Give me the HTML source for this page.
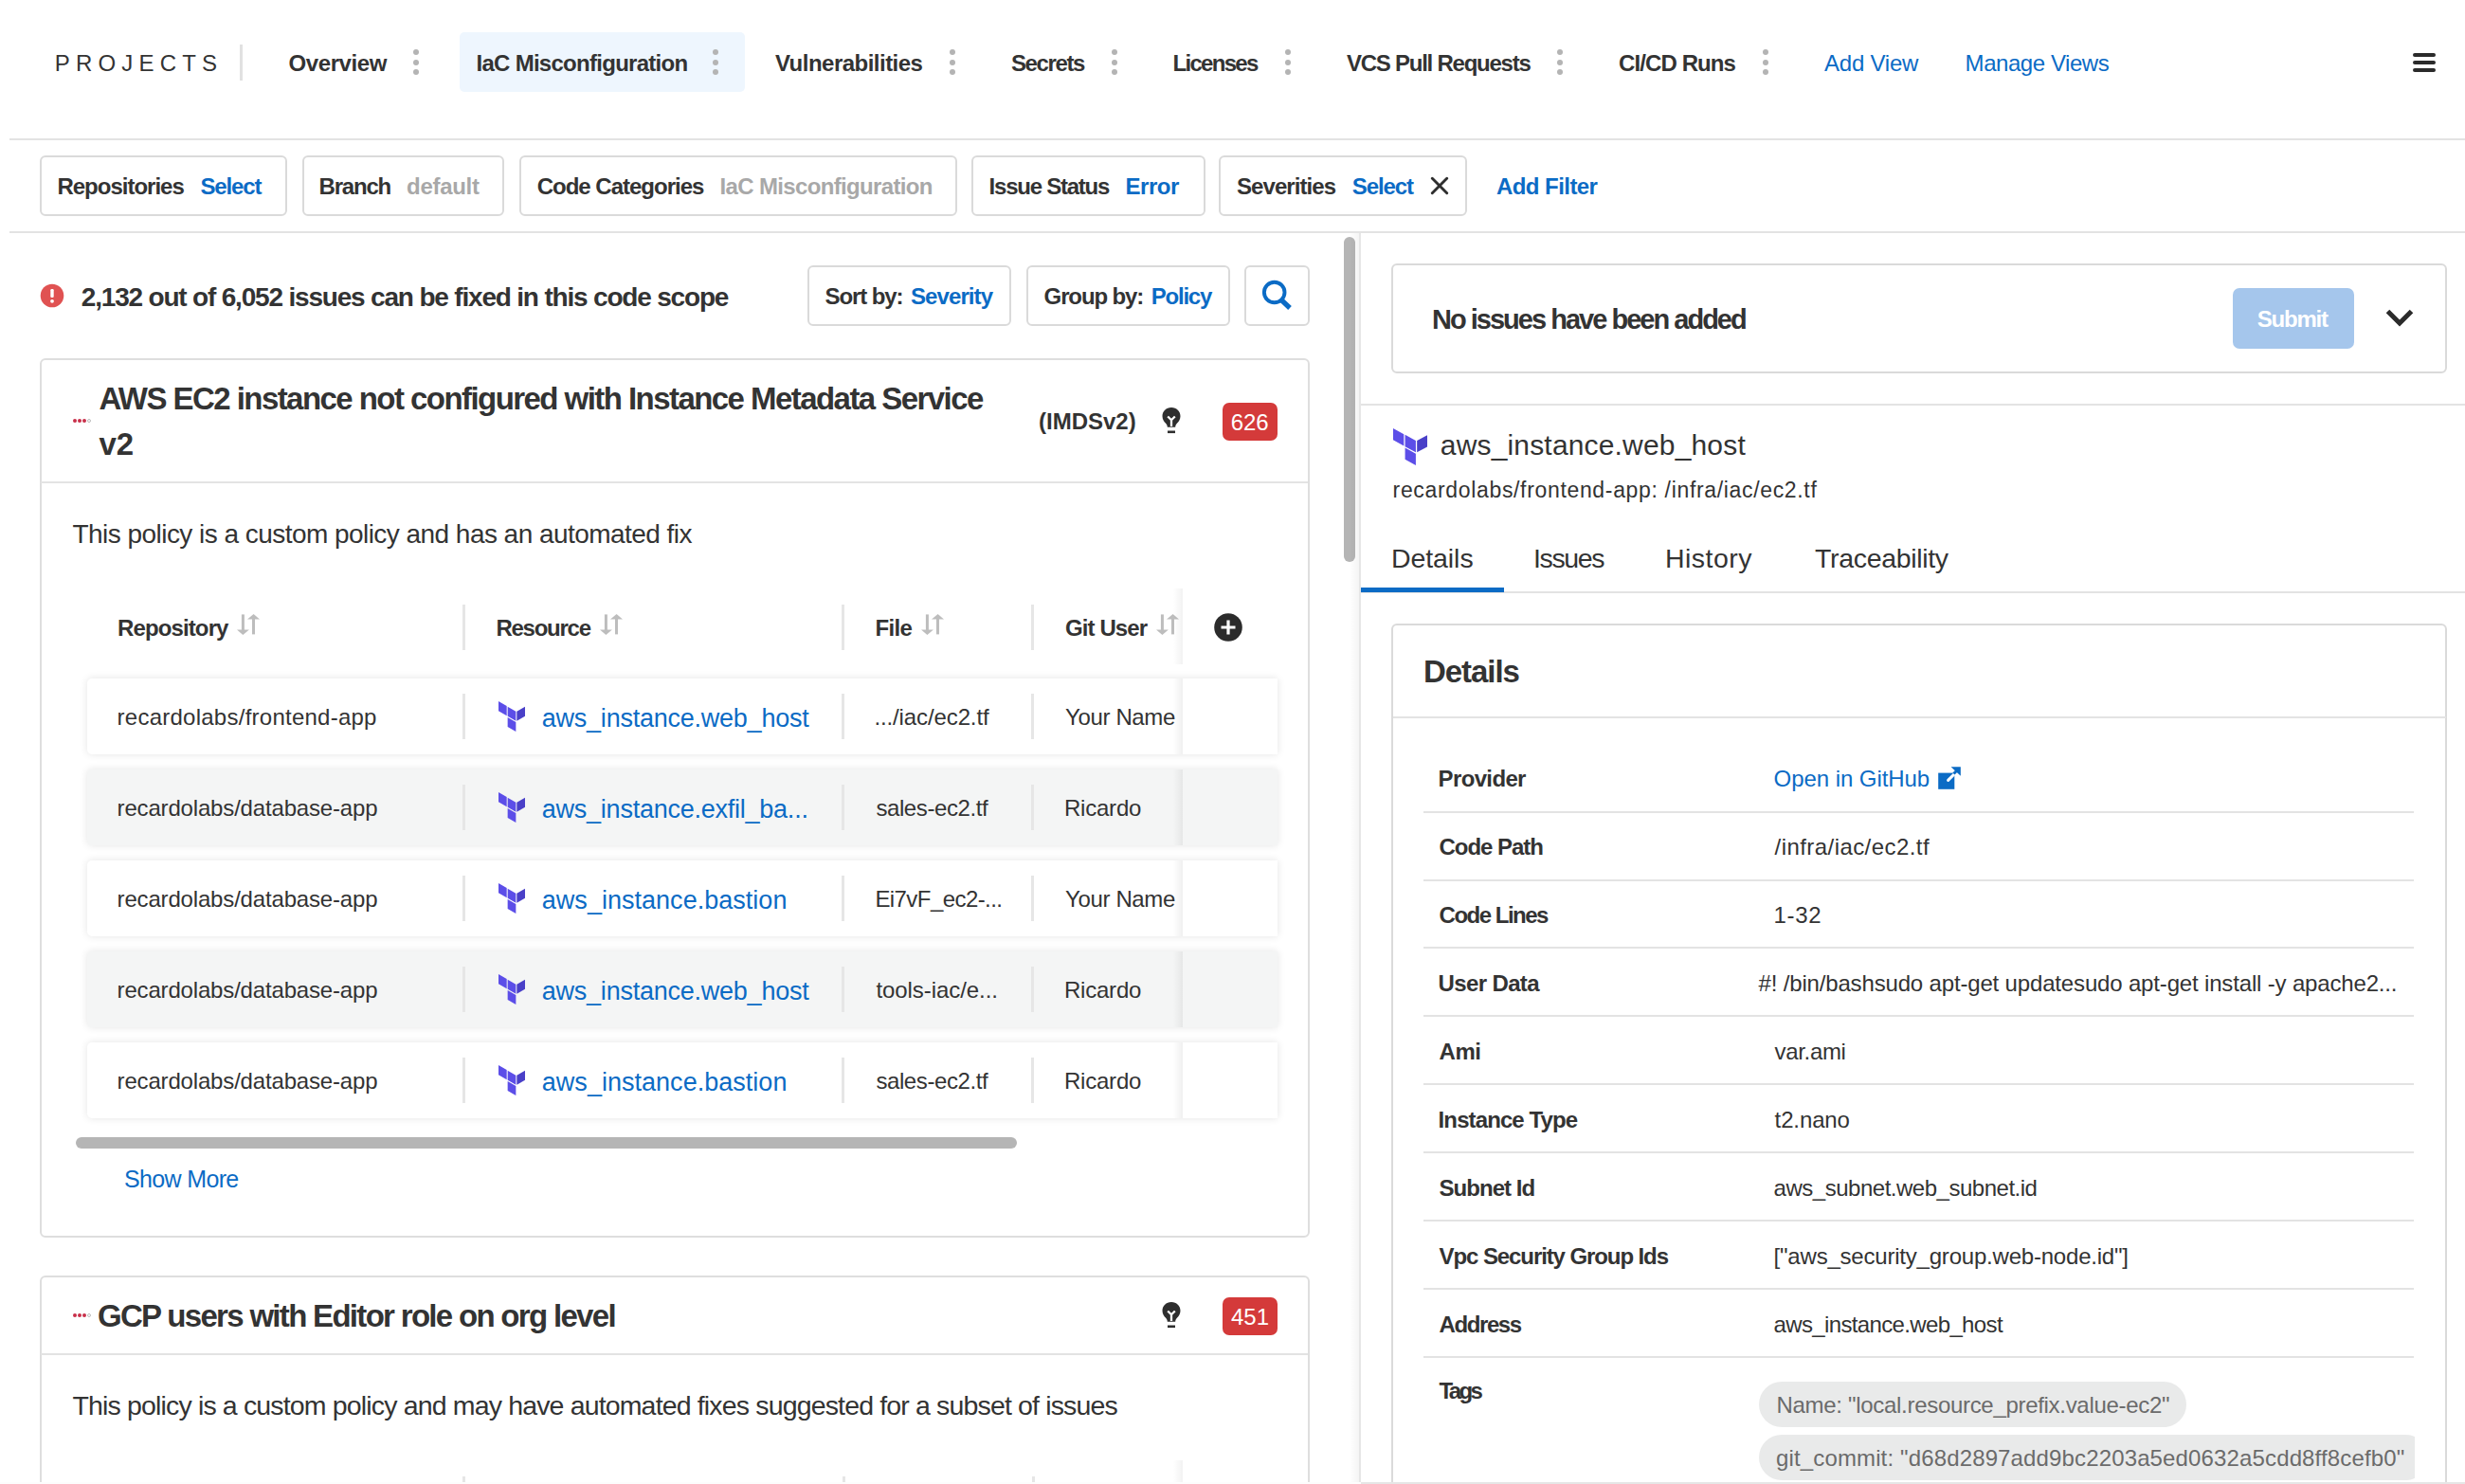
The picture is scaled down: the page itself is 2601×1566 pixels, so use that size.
<!DOCTYPE html><html><head><meta charset="utf-8"><title>IaC Misconfiguration</title><style>
*{margin:0;padding:0;box-sizing:border-box}
html,body{width:2601px;height:1566px;overflow:hidden;background:#fff}
body{position:relative;font-family:"Liberation Sans",sans-serif;color:#333333}
.abs{position:absolute}
.t{position:absolute;white-space:nowrap;line-height:1}
.dot{position:absolute;width:6.2px;height:6.2px;border-radius:50%;background:#b4b4b4}
.box{position:absolute;border:2px solid #dadada;border-radius:6px;background:transparent}
.card{position:absolute;border:2px solid #dedede;border-radius:6px;background:#fff}
.row{position:absolute;border-radius:5px 0 0 5px;box-shadow:0 0 9px rgba(0,0,0,0.11)}
.badge{position:absolute;background:#d43a3a;border-radius:7px}
.pill{position:absolute;background:#e9eaea;border-radius:24px}
</style></head><body>
<div class="abs" style="left:253px;top:47px;width:3px;height:38px;background:#e1e1e1"></div>
<div class="abs" style="left:485.3px;top:34.2px;width:300.5px;height:63.2px;background:#eef6fe;border-radius:5px"></div>
<div class="dot" style="left:435.9px;top:52.3px"></div><div class="dot" style="left:435.9px;top:62.9px"></div><div class="dot" style="left:435.9px;top:73.3px"></div>
<div class="dot" style="left:751.9px;top:52.3px"></div><div class="dot" style="left:751.9px;top:62.9px"></div><div class="dot" style="left:751.9px;top:73.3px"></div>
<div class="dot" style="left:1001.9px;top:52.3px"></div><div class="dot" style="left:1001.9px;top:62.9px"></div><div class="dot" style="left:1001.9px;top:73.3px"></div>
<div class="dot" style="left:1172.5px;top:52.3px"></div><div class="dot" style="left:1172.5px;top:62.9px"></div><div class="dot" style="left:1172.5px;top:73.3px"></div>
<div class="dot" style="left:1355.5px;top:52.3px"></div><div class="dot" style="left:1355.5px;top:62.9px"></div><div class="dot" style="left:1355.5px;top:73.3px"></div>
<div class="dot" style="left:1642.7px;top:52.3px"></div><div class="dot" style="left:1642.7px;top:62.9px"></div><div class="dot" style="left:1642.7px;top:73.3px"></div>
<div class="dot" style="left:1859.8px;top:52.3px"></div><div class="dot" style="left:1859.8px;top:62.9px"></div><div class="dot" style="left:1859.8px;top:73.3px"></div>
<div class="abs" style="left:2546px;top:56px;width:24px;height:3.8px;background:#2b2b2b;border-radius:2px"></div>
<div class="abs" style="left:2546px;top:64px;width:24px;height:3.8px;background:#2b2b2b;border-radius:2px"></div>
<div class="abs" style="left:2546px;top:72px;width:24px;height:3.8px;background:#2b2b2b;border-radius:2px"></div>
<div class="abs" style="left:10px;top:146px;width:2591px;height:2px;background:#e3e3e3"></div>
<div class="abs" style="left:10px;top:244px;width:2591px;height:2px;background:#e3e3e3"></div>
<div class="box" style="left:41.7px;top:163.7px;width:261.1px;height:64.2px;"></div>
<div class="box" style="left:319.0px;top:163.7px;width:213.4px;height:64.2px;"></div>
<div class="box" style="left:547.5px;top:163.7px;width:462.5px;height:64.2px;"></div>
<div class="box" style="left:1025.4px;top:163.7px;width:246.2px;height:64.2px;"></div>
<div class="box" style="left:1286.0px;top:163.7px;width:261.5px;height:64.2px;"></div>
<svg class="abs" style="left:1505px;top:182px" width="28" height="28" viewBox="0 0 28 28"><path d="M6.3 6.3L21.7 21.7M21.7 6.3L6.3 21.7" stroke="#2e2e2e" stroke-width="2.9" stroke-linecap="round"/></svg>
<svg class="abs" style="left:42px;top:299px" width="26" height="26" viewBox="0 0 26 26"><circle cx="13" cy="13" r="12.3" fill="#e05252"/><rect x="11.3" y="6" width="3.4" height="9" rx="1.2" fill="#fff"/><circle cx="13" cy="18.8" r="1.9" fill="#fff"/></svg>
<div class="box" style="left:851.5px;top:279.5px;width:215.6px;height:64.8px;"></div>
<div class="box" style="left:1082.6px;top:279.5px;width:215.8px;height:64.8px;"></div>
<div class="box" style="left:1313.3px;top:279.5px;width:69.1px;height:64.8px;"></div>
<svg class="abs" style="left:1325px;top:290px" width="44" height="44" viewBox="0 0 44 44"><circle cx="19.7" cy="18.5" r="10.8" fill="none" stroke="#0b6bc5" stroke-width="3.9"/><path d="M26.5 26L36 35" stroke="#0b6bc5" stroke-width="5.2"/></svg>
<div class="abs" style="left:1418px;top:250px;width:12px;height:343px;background:#b5b5b5;border-radius:6px"></div>
<div class="abs" style="left:1424px;top:246px;width:10px;height:1320px;background:linear-gradient(to right,rgba(0,0,0,0),rgba(0,0,0,0.045))"></div>
<div class="abs" style="left:1434px;top:246px;width:2px;height:1320px;background:#e6e6e6"></div>
<div class="card" style="left:41.6px;top:377.9px;width:1340.2px;height:927.9px;"></div>
<div class="abs" style="left:43px;top:508px;width:1337px;height:2px;background:#e3e3e3"></div>
<div class="abs" style="left:76.50px;top:441.80px;width:4px;height:4px;border-radius:50%;background:#c9304a"></div><div class="abs" style="left:81.55px;top:441.80px;width:4px;height:4px;border-radius:50%;background:#c9304a"></div><div class="abs" style="left:86.60px;top:441.80px;width:4px;height:4px;border-radius:50%;background:#c9304a"></div><div class="abs" style="left:91.70px;top:441.80px;width:4px;height:4px;border-radius:50%;box-sizing:border-box;border:1px solid #bbb"></div>
<svg class="abs" style="left:1225px;top:429px" width="22" height="30" viewBox="0 0 22 30"><path d="M11 1C5.5 1 1.5 5 1.5 10.2c0 3.4 1.8 5.6 3.4 7.4c1.2 1.3 1.9 2.6 1.9 4.2h8.4c0-1.6.7-2.9 1.9-4.2c1.6-1.8 3.4-4 3.4-7.4C20.5 5 16.5 1 11 1z" fill="#2e2e2e"/><path d="M7.2 10.5L11 14.2L14.8 10.5M11 14.2V21" stroke="#fff" stroke-width="2.3" fill="none"/><rect x="7" y="25.5" width="8" height="2.6" fill="#2e2e2e"/></svg>
<div class="badge" style="left:1290px;top:425px;width:58px;height:40px"></div><div class="t" style="left:1298.65px;top:433.59px;font-size:24px;color:#fff;">626</div>
<div class="abs" style="left:488.2px;top:637.5px;width:3px;height:48px;background:#e6e6e6"></div>
<div class="abs" style="left:888.2px;top:637.5px;width:3px;height:48px;background:#e6e6e6"></div>
<div class="abs" style="left:1087.9px;top:637.5px;width:3px;height:48px;background:#e6e6e6"></div>
<svg class="abs" style="left:250px;top:647px" width="24" height="24" viewBox="0 0 24 24"><path d="M6.4 1.4V18" stroke="#bdbdbd" stroke-width="3" fill="none"/><path d="M-0.1 17.5H12.9L6.4 23z" fill="#bdbdbd"/><path d="M17.5 22.4V6" stroke="#bdbdbd" stroke-width="3" fill="none"/><path d="M11 6.4H24L17.6 0.9z" fill="#bdbdbd"/></svg>
<svg class="abs" style="left:632.5px;top:647px" width="24" height="24" viewBox="0 0 24 24"><path d="M6.4 1.4V18" stroke="#bdbdbd" stroke-width="3" fill="none"/><path d="M-0.1 17.5H12.9L6.4 23z" fill="#bdbdbd"/><path d="M17.5 22.4V6" stroke="#bdbdbd" stroke-width="3" fill="none"/><path d="M11 6.4H24L17.6 0.9z" fill="#bdbdbd"/></svg>
<svg class="abs" style="left:971.5px;top:647px" width="24" height="24" viewBox="0 0 24 24"><path d="M6.4 1.4V18" stroke="#bdbdbd" stroke-width="3" fill="none"/><path d="M-0.1 17.5H12.9L6.4 23z" fill="#bdbdbd"/><path d="M17.5 22.4V6" stroke="#bdbdbd" stroke-width="3" fill="none"/><path d="M11 6.4H24L17.6 0.9z" fill="#bdbdbd"/></svg>
<svg class="abs" style="left:1220px;top:647px" width="24" height="24" viewBox="0 0 24 24"><path d="M6.4 1.4V18" stroke="#bdbdbd" stroke-width="3" fill="none"/><path d="M-0.1 17.5H12.9L6.4 23z" fill="#bdbdbd"/><path d="M17.5 22.4V6" stroke="#bdbdbd" stroke-width="3" fill="none"/><path d="M11 6.4H24L17.6 0.9z" fill="#bdbdbd"/></svg>
<div class="abs" style="left:1238px;top:621px;width:10px;height:80px;background:linear-gradient(to right,rgba(0,0,0,0),rgba(0,0,0,0.05))"></div>
<svg class="abs" style="left:1281px;top:647px" width="30" height="30" viewBox="0 0 30 30"><circle cx="15" cy="15" r="14.8" fill="#2b2b2b"/><path d="M15 7.5V22.5M7.5 15H22.5" stroke="#fff" stroke-width="3.2"/></svg>
<div class="row" style="left:92.4px;top:715.5px;width:1255.3px;height:80px;background:#ffffff"></div>
<div class="row" style="left:92.4px;top:811.6px;width:1255.3px;height:80px;background:#f4f5f5"></div>
<div class="row" style="left:92.4px;top:907.7px;width:1255.3px;height:80px;background:#ffffff"></div>
<div class="row" style="left:92.4px;top:1003.8px;width:1255.3px;height:80px;background:#f4f5f5"></div>
<div class="row" style="left:92.4px;top:1099.9px;width:1255.3px;height:80px;background:#ffffff"></div>
<div class="abs" style="left:488.2px;top:731.5px;width:3px;height:48px;background:#e6e6e6"></div>
<div class="abs" style="left:888.2px;top:731.5px;width:3px;height:48px;background:#e6e6e6"></div>
<div class="abs" style="left:1087.9px;top:731.5px;width:3px;height:48px;background:#e6e6e6"></div>
<div class="abs" style="left:1238px;top:715.5px;width:10px;height:80px;background:linear-gradient(to right,rgba(0,0,0,0),rgba(0,0,0,0.06))"></div>
<svg class="abs" style="left:526px;top:740.0px" width="28" height="32" viewBox="7.3 4.7 43.2 48.9" preserveAspectRatio="none"><path d="M22.2 13.3l13.4 7.7v15.5l-13.4-7.7z" fill="#5c4ee8"/><path d="M37.1 21v15.5l13.4-7.7V13.3z" fill="#4a40c8"/><path d="M7.3 4.7v15.5l13.4 7.7V12.4zM22.2 45.9l13.4 7.7V38.2l-13.4-7.7z" fill="#5c4ee8"/></svg>
<div class="abs" style="left:488.2px;top:827.6px;width:3px;height:48px;background:#e6e6e6"></div>
<div class="abs" style="left:888.2px;top:827.6px;width:3px;height:48px;background:#e6e6e6"></div>
<div class="abs" style="left:1087.9px;top:827.6px;width:3px;height:48px;background:#e6e6e6"></div>
<div class="abs" style="left:1238px;top:811.6px;width:10px;height:80px;background:linear-gradient(to right,rgba(0,0,0,0),rgba(0,0,0,0.06))"></div>
<svg class="abs" style="left:526px;top:836.1px" width="28" height="32" viewBox="7.3 4.7 43.2 48.9" preserveAspectRatio="none"><path d="M22.2 13.3l13.4 7.7v15.5l-13.4-7.7z" fill="#5c4ee8"/><path d="M37.1 21v15.5l13.4-7.7V13.3z" fill="#4a40c8"/><path d="M7.3 4.7v15.5l13.4 7.7V12.4zM22.2 45.9l13.4 7.7V38.2l-13.4-7.7z" fill="#5c4ee8"/></svg>
<div class="abs" style="left:488.2px;top:923.7px;width:3px;height:48px;background:#e6e6e6"></div>
<div class="abs" style="left:888.2px;top:923.7px;width:3px;height:48px;background:#e6e6e6"></div>
<div class="abs" style="left:1087.9px;top:923.7px;width:3px;height:48px;background:#e6e6e6"></div>
<div class="abs" style="left:1238px;top:907.7px;width:10px;height:80px;background:linear-gradient(to right,rgba(0,0,0,0),rgba(0,0,0,0.06))"></div>
<svg class="abs" style="left:526px;top:932.2px" width="28" height="32" viewBox="7.3 4.7 43.2 48.9" preserveAspectRatio="none"><path d="M22.2 13.3l13.4 7.7v15.5l-13.4-7.7z" fill="#5c4ee8"/><path d="M37.1 21v15.5l13.4-7.7V13.3z" fill="#4a40c8"/><path d="M7.3 4.7v15.5l13.4 7.7V12.4zM22.2 45.9l13.4 7.7V38.2l-13.4-7.7z" fill="#5c4ee8"/></svg>
<div class="abs" style="left:488.2px;top:1019.8px;width:3px;height:48px;background:#e6e6e6"></div>
<div class="abs" style="left:888.2px;top:1019.8px;width:3px;height:48px;background:#e6e6e6"></div>
<div class="abs" style="left:1087.9px;top:1019.8px;width:3px;height:48px;background:#e6e6e6"></div>
<div class="abs" style="left:1238px;top:1003.8px;width:10px;height:80px;background:linear-gradient(to right,rgba(0,0,0,0),rgba(0,0,0,0.06))"></div>
<svg class="abs" style="left:526px;top:1028.3px" width="28" height="32" viewBox="7.3 4.7 43.2 48.9" preserveAspectRatio="none"><path d="M22.2 13.3l13.4 7.7v15.5l-13.4-7.7z" fill="#5c4ee8"/><path d="M37.1 21v15.5l13.4-7.7V13.3z" fill="#4a40c8"/><path d="M7.3 4.7v15.5l13.4 7.7V12.4zM22.2 45.9l13.4 7.7V38.2l-13.4-7.7z" fill="#5c4ee8"/></svg>
<div class="abs" style="left:488.2px;top:1115.9px;width:3px;height:48px;background:#e6e6e6"></div>
<div class="abs" style="left:888.2px;top:1115.9px;width:3px;height:48px;background:#e6e6e6"></div>
<div class="abs" style="left:1087.9px;top:1115.9px;width:3px;height:48px;background:#e6e6e6"></div>
<div class="abs" style="left:1238px;top:1099.9px;width:10px;height:80px;background:linear-gradient(to right,rgba(0,0,0,0),rgba(0,0,0,0.06))"></div>
<svg class="abs" style="left:526px;top:1124.4px" width="28" height="32" viewBox="7.3 4.7 43.2 48.9" preserveAspectRatio="none"><path d="M22.2 13.3l13.4 7.7v15.5l-13.4-7.7z" fill="#5c4ee8"/><path d="M37.1 21v15.5l13.4-7.7V13.3z" fill="#4a40c8"/><path d="M7.3 4.7v15.5l13.4 7.7V12.4zM22.2 45.9l13.4 7.7V38.2l-13.4-7.7z" fill="#5c4ee8"/></svg>
<div class="abs" style="left:79.7px;top:1200px;width:993px;height:12px;background:#b5b5b5;border-radius:6px"></div>
<div class="card" style="left:41.6px;top:1346.2px;width:1340.2px;height:454.8px;"></div>
<div class="abs" style="left:43px;top:1428px;width:1337px;height:2px;background:#e3e3e3"></div>
<div class="abs" style="left:76.50px;top:1386.00px;width:4px;height:4px;border-radius:50%;background:#c9304a"></div><div class="abs" style="left:81.55px;top:1386.00px;width:4px;height:4px;border-radius:50%;background:#c9304a"></div><div class="abs" style="left:86.60px;top:1386.00px;width:4px;height:4px;border-radius:50%;background:#c9304a"></div><div class="abs" style="left:91.70px;top:1386.00px;width:4px;height:4px;border-radius:50%;box-sizing:border-box;border:1px solid #bbb"></div>
<svg class="abs" style="left:1225px;top:1373px" width="22" height="30" viewBox="0 0 22 30"><path d="M11 1C5.5 1 1.5 5 1.5 10.2c0 3.4 1.8 5.6 3.4 7.4c1.2 1.3 1.9 2.6 1.9 4.2h8.4c0-1.6.7-2.9 1.9-4.2c1.6-1.8 3.4-4 3.4-7.4C20.5 5 16.5 1 11 1z" fill="#2e2e2e"/><path d="M7.2 10.5L11 14.2L14.8 10.5M11 14.2V21" stroke="#fff" stroke-width="2.3" fill="none"/><rect x="7" y="25.5" width="8" height="2.6" fill="#2e2e2e"/></svg>
<div class="badge" style="left:1290px;top:1369.4px;width:57.59999999999991px;height:39.399999999999864px"></div><div class="t" style="left:1298.95px;top:1377.69px;font-size:24px;color:#fff;">451</div>
<div class="abs" style="left:487.9px;top:1558px;width:3px;height:20px;background:#e6e6e6"></div>
<div class="abs" style="left:888.5px;top:1558px;width:3px;height:20px;background:#e6e6e6"></div>
<div class="abs" style="left:1088.5px;top:1558px;width:3px;height:20px;background:#e6e6e6"></div>
<div class="abs" style="left:1238px;top:1541px;width:10px;height:30px;background:linear-gradient(to right,rgba(0,0,0,0),rgba(0,0,0,0.05))"></div>
<div class="box" style="left:1467.8px;top:277.9px;width:1114.4px;height:115.9px;"></div>
<div class="abs" style="left:2356px;top:304.3px;width:128px;height:63.3px;background:#a5c6ec;border-radius:7px"></div>
<svg class="abs" style="left:2512px;top:320px" width="40" height="30" viewBox="0 0 40 30"><path d="M7.5 8.5L20 21L32.5 8.5" stroke="#2b2b2b" stroke-width="5" fill="none"/></svg>
<div class="abs" style="left:1436px;top:425.6px;width:1165px;height:2px;background:#e3e3e3"></div>
<svg class="abs" style="left:1469.7px;top:452px" width="36.5" height="39" viewBox="7.3 4.7 43.2 48.9" preserveAspectRatio="none"><path d="M22.2 13.3l13.4 7.7v15.5l-13.4-7.7z" fill="#5c4ee8"/><path d="M37.1 21v15.5l13.4-7.7V13.3z" fill="#4a40c8"/><path d="M7.3 4.7v15.5l13.4 7.7V12.4zM22.2 45.9l13.4 7.7V38.2l-13.4-7.7z" fill="#5c4ee8"/></svg>
<div class="abs" style="left:1436px;top:624px;width:1165px;height:2px;background:#e3e3e3"></div>
<div class="abs" style="left:1435.6px;top:620px;width:151px;height:4.5px;background:#0b6bc5"></div>
<div class="box" style="left:1468.0px;top:657.8px;width:1114.2px;height:1143.2px;"></div>
<div class="abs" style="left:1470px;top:756px;width:1111px;height:2px;background:#e3e3e3"></div>
<div class="abs" style="left:1502.3px;top:856.0px;width:1045px;height:2px;background:#e3e3e3"></div>
<div class="abs" style="left:1502.3px;top:928.0px;width:1045px;height:2px;background:#e3e3e3"></div>
<div class="abs" style="left:1502.3px;top:999.4px;width:1045px;height:2px;background:#e3e3e3"></div>
<div class="abs" style="left:1502.3px;top:1071.4px;width:1045px;height:2px;background:#e3e3e3"></div>
<div class="abs" style="left:1502.3px;top:1143.4px;width:1045px;height:2px;background:#e3e3e3"></div>
<div class="abs" style="left:1502.3px;top:1215.4px;width:1045px;height:2px;background:#e3e3e3"></div>
<div class="abs" style="left:1502.3px;top:1287.4px;width:1045px;height:2px;background:#e3e3e3"></div>
<div class="abs" style="left:1502.3px;top:1359.4px;width:1045px;height:2px;background:#e3e3e3"></div>
<div class="abs" style="left:1502.3px;top:1431.4px;width:1045px;height:2px;background:#e3e3e3"></div>
<svg class="abs" style="left:2040px;top:805px" width="32" height="32" viewBox="0 0 32 32"><rect x="5.2" y="10.6" width="17.1" height="17.2" fill="#0b6bc5"/><path d="M15.6 18.4L23.5 10.5" stroke="#fff" stroke-width="3" stroke-linecap="round"/><path d="M18.6 4.2H28.8V13.8z" fill="#0b6bc5"/><path d="M21.5 11.5L25 8" stroke="#0b6bc5" stroke-width="3"/></svg>
<div class="pill" style="left:1855.5px;top:1457.8px;width:451.7px;height:47.8px"></div>
<div class="abs" style="left:1855.5px;top:1513.9px;width:692.5px;height:47.8px;overflow:hidden"><div class="pill" style="left:0;top:0;width:706px;height:47.8px"></div></div>
<div class="abs" style="left:0;top:1564px;width:1436px;height:2px;background:#fdfdfd"></div><div class="abs" style="left:1436px;top:1564px;width:1165px;height:2px;background:#e6e6e6"></div>
<div class="t" style="left:57.80px;top:54.80px;font-size:24px;letter-spacing:6.170px;">PROJECTS</div>
<div class="t" style="left:304.60px;top:55.30px;font-size:24px;font-weight:bold;letter-spacing:-0.424px;">Overview</div>
<div class="t" style="left:502.50px;top:55.30px;font-size:24px;font-weight:bold;letter-spacing:-0.720px;">IaC Misconfiguration</div>
<div class="t" style="left:818.00px;top:55.30px;font-size:24px;font-weight:bold;letter-spacing:-0.515px;">Vulnerabilities</div>
<div class="t" style="left:1067.00px;top:55.30px;font-size:24px;font-weight:bold;letter-spacing:-1.397px;">Secrets</div>
<div class="t" style="left:1237.50px;top:55.30px;font-size:24px;font-weight:bold;letter-spacing:-1.697px;">Licenses</div>
<div class="t" style="left:1421.00px;top:55.30px;font-size:24px;font-weight:bold;letter-spacing:-1.248px;">VCS Pull Requests</div>
<div class="t" style="left:1708.00px;top:55.30px;font-size:24px;font-weight:bold;letter-spacing:-0.895px;">CI/CD Runs</div>
<div class="t" style="left:1925.00px;top:55.30px;font-size:24px;color:#0b6bc5;letter-spacing:-0.232px;">Add View</div>
<div class="t" style="left:2073.60px;top:55.30px;font-size:24px;color:#0b6bc5;letter-spacing:-0.444px;">Manage Views</div>
<div class="t" style="left:60.40px;top:185.00px;font-size:24px;font-weight:bold;letter-spacing:-1.002px;">Repositories</div>
<div class="t" style="left:211.40px;top:185.00px;font-size:24px;font-weight:bold;color:#0b6bc5;letter-spacing:-1.104px;">Select</div>
<div class="t" style="left:336.50px;top:185.00px;font-size:24px;font-weight:bold;letter-spacing:-1.185px;">Branch</div>
<div class="t" style="left:429.00px;top:185.00px;font-size:24px;font-weight:bold;color:#a8a8a8;letter-spacing:-0.279px;">default</div>
<div class="t" style="left:566.70px;top:185.00px;font-size:24px;font-weight:bold;letter-spacing:-1.005px;">Code Categories</div>
<div class="t" style="left:759.60px;top:185.00px;font-size:24px;font-weight:bold;color:#a8a8a8;letter-spacing:-0.657px;">IaC Misconfiguration</div>
<div class="t" style="left:1043.60px;top:185.00px;font-size:24px;font-weight:bold;letter-spacing:-1.240px;">Issue Status</div>
<div class="t" style="left:1187.60px;top:185.00px;font-size:24px;font-weight:bold;color:#0b6bc5;letter-spacing:-0.487px;">Error</div>
<div class="t" style="left:1305.00px;top:185.00px;font-size:24px;font-weight:bold;letter-spacing:-0.930px;">Severities</div>
<div class="t" style="left:1426.80px;top:185.00px;font-size:24px;font-weight:bold;color:#0b6bc5;letter-spacing:-1.104px;">Select</div>
<div class="t" style="left:1579.00px;top:185.00px;font-size:24px;font-weight:bold;color:#0b6bc5;letter-spacing:-0.562px;">Add Filter</div>
<div class="t" style="left:85.80px;top:299.80px;font-size:28px;font-weight:bold;letter-spacing:-1.187px;">2,132 out of 6,052 issues can be fixed in this code scope</div>
<div class="t" style="left:870.50px;top:301.00px;font-size:24px;font-weight:bold;letter-spacing:-1.082px;">Sort by:</div>
<div class="t" style="left:961.00px;top:301.00px;font-size:24px;font-weight:bold;color:#0b6bc5;letter-spacing:-0.907px;">Severity</div>
<div class="t" style="left:1101.60px;top:301.00px;font-size:24px;font-weight:bold;letter-spacing:-1.121px;">Group by:</div>
<div class="t" style="left:1214.80px;top:301.00px;font-size:24px;font-weight:bold;color:#0b6bc5;letter-spacing:-1.250px;">Policy</div>
<div class="t" style="left:104.40px;top:403.90px;font-size:33px;font-weight:bold;letter-spacing:-1.554px;">AWS EC2 instance not configured with Instance Metadata Service</div>
<div class="t" style="left:104.40px;top:451.80px;font-size:33px;font-weight:bold;">v2</div>
<div class="t" style="left:1096.00px;top:433.30px;font-size:24px;font-weight:bold;">(IMDSv2)</div>
<div class="t" style="left:76.50px;top:549.80px;font-size:28px;letter-spacing:-0.541px;">This policy is a custom policy and has an automated fix</div>
<div class="t" style="left:124.10px;top:650.70px;font-size:24px;font-weight:bold;letter-spacing:-0.890px;">Repository</div>
<div class="t" style="left:523.40px;top:650.70px;font-size:24px;font-weight:bold;letter-spacing:-1.248px;">Resource</div>
<div class="t" style="left:923.40px;top:650.70px;font-size:24px;font-weight:bold;letter-spacing:-0.665px;">File</div>
<div class="t" style="left:1124.00px;top:650.70px;font-size:24px;font-weight:bold;letter-spacing:-0.903px;">Git User</div>
<div class="t" style="left:123.60px;top:744.80px;font-size:24px;letter-spacing:0.247px;">recardolabs/frontend-app</div>
<div class="t" style="left:571.80px;top:744.90px;font-size:27px;color:#0b6bc5;letter-spacing:-0.239px;">aws_instance.web_host</div>
<div class="t" style="left:922.40px;top:744.80px;font-size:24px;letter-spacing:-0.112px;">.../iac/ec2.tf</div>
<div class="t" style="left:1124.00px;top:744.80px;font-size:24px;letter-spacing:-0.354px;">Your Name</div>
<div class="t" style="left:123.60px;top:840.90px;font-size:24px;letter-spacing:-0.170px;">recardolabs/database-app</div>
<div class="t" style="left:571.80px;top:841.00px;font-size:27px;color:#0b6bc5;letter-spacing:-0.242px;">aws_instance.exfil_ba...</div>
<div class="t" style="left:924.40px;top:840.90px;font-size:24px;letter-spacing:-0.405px;">sales-ec2.tf</div>
<div class="t" style="left:1123.00px;top:840.90px;font-size:24px;letter-spacing:-0.225px;">Ricardo</div>
<div class="t" style="left:123.60px;top:937.00px;font-size:24px;letter-spacing:-0.170px;">recardolabs/database-app</div>
<div class="t" style="left:571.80px;top:937.10px;font-size:27px;color:#0b6bc5;letter-spacing:0.024px;">aws_instance.bastion</div>
<div class="t" style="left:923.40px;top:937.00px;font-size:24px;letter-spacing:-0.568px;">Ei7vF_ec2-...</div>
<div class="t" style="left:1124.00px;top:937.00px;font-size:24px;letter-spacing:-0.354px;">Your Name</div>
<div class="t" style="left:123.60px;top:1033.10px;font-size:24px;letter-spacing:-0.170px;">recardolabs/database-app</div>
<div class="t" style="left:571.80px;top:1033.20px;font-size:27px;color:#0b6bc5;letter-spacing:-0.239px;">aws_instance.web_host</div>
<div class="t" style="left:924.40px;top:1033.10px;font-size:24px;letter-spacing:-0.063px;">tools-iac/e...</div>
<div class="t" style="left:1123.00px;top:1033.10px;font-size:24px;letter-spacing:-0.225px;">Ricardo</div>
<div class="t" style="left:123.60px;top:1129.20px;font-size:24px;letter-spacing:-0.170px;">recardolabs/database-app</div>
<div class="t" style="left:571.80px;top:1129.30px;font-size:27px;color:#0b6bc5;letter-spacing:0.024px;">aws_instance.bastion</div>
<div class="t" style="left:924.40px;top:1129.20px;font-size:24px;letter-spacing:-0.405px;">sales-ec2.tf</div>
<div class="t" style="left:1123.00px;top:1129.20px;font-size:24px;letter-spacing:-0.225px;">Ricardo</div>
<div class="t" style="left:131.00px;top:1232.00px;font-size:25px;color:#0b6bc5;letter-spacing:-0.655px;">Show More</div>
<div class="t" style="left:103.00px;top:1372.00px;font-size:33px;font-weight:bold;letter-spacing:-1.692px;">GCP users with Editor role on org level</div>
<div class="t" style="left:76.50px;top:1469.20px;font-size:28.5px;letter-spacing:-0.845px;">This policy is a custom policy and may have automated fixes suggested for a subset of issues</div>
<div class="t" style="left:1511.00px;top:322.90px;font-size:29px;font-weight:bold;letter-spacing:-1.985px;">No issues have been added</div>
<div class="t" style="left:2381.70px;top:324.60px;font-size:24px;font-weight:bold;color:#ffffff;letter-spacing:-1.207px;">Submit</div>
<div class="t" style="left:1519.80px;top:454.60px;font-size:30px;letter-spacing:0.170px;">aws_instance.web_host</div>
<div class="t" style="left:1469.60px;top:505.70px;font-size:23px;letter-spacing:0.663px;">recardolabs/frontend-app: /infra/iac/ec2.tf</div>
<div class="t" style="left:1467.90px;top:574.70px;font-size:28.5px;letter-spacing:-0.061px;">Details</div>
<div class="t" style="left:1618.00px;top:574.70px;font-size:28.5px;letter-spacing:-1.364px;">Issues</div>
<div class="t" style="left:1757.00px;top:574.70px;font-size:28.5px;letter-spacing:0.463px;">History</div>
<div class="t" style="left:1915.00px;top:574.70px;font-size:28.5px;letter-spacing:-0.328px;">Traceability</div>
<div class="t" style="left:1501.90px;top:692.00px;font-size:33px;font-weight:bold;letter-spacing:-1.027px;">Details</div>
<div class="t" style="left:1517.60px;top:810.30px;font-size:24px;font-weight:bold;letter-spacing:-0.647px;">Provider</div>
<div class="t" style="left:1871.60px;top:810.30px;font-size:24px;color:#0b6bc5;letter-spacing:-0.067px;">Open in GitHub</div>
<div class="t" style="left:1518.60px;top:882.30px;font-size:24px;font-weight:bold;letter-spacing:-1.052px;">Code Path</div>
<div class="t" style="left:1872.60px;top:882.30px;font-size:24px;letter-spacing:0.431px;">/infra/iac/ec2.tf</div>
<div class="t" style="left:1518.60px;top:954.30px;font-size:24px;font-weight:bold;letter-spacing:-1.500px;">Code Lines</div>
<div class="t" style="left:1871.60px;top:954.30px;font-size:24px;letter-spacing:0.671px;">1-32</div>
<div class="t" style="left:1517.60px;top:1026.30px;font-size:24px;font-weight:bold;letter-spacing:-0.638px;">User Data</div>
<div class="t" style="left:1855.50px;top:1026.30px;font-size:24px;letter-spacing:-0.163px;">#! /bin/bashsudo apt-get updatesudo apt-get install -y apache2...</div>
<div class="t" style="left:1518.60px;top:1098.30px;font-size:24px;font-weight:bold;letter-spacing:-0.536px;">Ami</div>
<div class="t" style="left:1872.60px;top:1098.30px;font-size:24px;letter-spacing:-0.337px;">var.ami</div>
<div class="t" style="left:1517.60px;top:1170.30px;font-size:24px;font-weight:bold;letter-spacing:-0.894px;">Instance Type</div>
<div class="t" style="left:1872.60px;top:1170.30px;font-size:24px;letter-spacing:-0.121px;">t2.nano</div>
<div class="t" style="left:1518.60px;top:1242.30px;font-size:24px;font-weight:bold;letter-spacing:-0.983px;">Subnet Id</div>
<div class="t" style="left:1871.60px;top:1242.30px;font-size:24px;letter-spacing:-0.486px;">aws_subnet.web_subnet.id</div>
<div class="t" style="left:1518.60px;top:1314.30px;font-size:24px;font-weight:bold;letter-spacing:-1.093px;">Vpc Security Group Ids</div>
<div class="t" style="left:1871.60px;top:1314.30px;font-size:24px;letter-spacing:-0.208px;">[&quot;aws_security_group.web-node.id&quot;]</div>
<div class="t" style="left:1518.60px;top:1386.30px;font-size:24px;font-weight:bold;letter-spacing:-1.415px;">Address</div>
<div class="t" style="left:1871.60px;top:1386.30px;font-size:24px;letter-spacing:-0.643px;">aws_instance.web_host</div>
<div class="t" style="left:1518.60px;top:1456.00px;font-size:24px;font-weight:bold;letter-spacing:-2.696px;">Tags</div>
<div class="t" style="left:1874.50px;top:1471.00px;font-size:24px;color:#6b6b6b;letter-spacing:-0.304px;">Name: &quot;local.resource_prefix.value-ec2&quot;</div>
<div class="t" style="left:1874.00px;top:1527.00px;font-size:24px;color:#6b6b6b;letter-spacing:0.140px;">git_commit: &quot;d68d2897add9bc2203a5ed0632a5cdd8ff8cefb0&quot;</div>
</body></html>
